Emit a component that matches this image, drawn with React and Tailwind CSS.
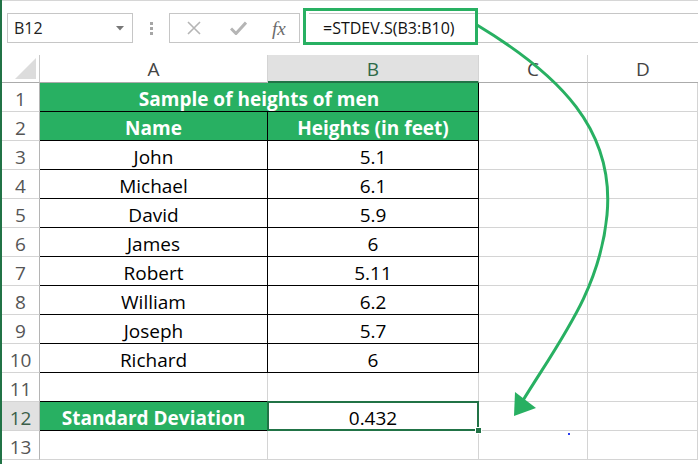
import React from 'react';

const names = [
    ['John', '5.1'],
    ['Michael', '6.1'],
    ['David', '5.9'],
    ['James', '6'],
    ['Robert', '5.11'],
    ['William', '6.2'],
    ['Joseph', '5.7'],
    ['Richard', '6'],
];

function RowHead({ n, active }) {
    return (
        <div
            className={
                'h-[29px] pt-[4px] flex items-center justify-center border-b border-r border-b-[#d4d4d4] border-r-[#b4b4b4] text-[19px] leading-[24px] ' +
                (active ? 'bg-[#e1e1e1] text-[#3b5e49]' : 'bg-white text-[#555]')
            }
        >
            {n}
        </div>
    );
}

function Cell({ children, className = '' }) {
    return (
        <div className={'h-[29px] pt-[4px] flex items-center justify-center border-b border-r text-[19px] leading-[24px] ' + className}>
            {children}
        </div>
    );
}

const gray = 'border-[#d4d4d4]';

export default function App() {
    return (
        <div className="relative w-[698px] h-[464px] overflow-hidden bg-white flex" style={{ fontFamily: '"Open Sans", sans-serif' }}>
            <div className="w-[2px] bg-[#217346] shrink-0" />
            <div className="flex-1 flex flex-col">
                {/* Formula bar */}
                <div className="h-[55px] border-t border-[#d6d6d6] flex items-start pt-[12px]">
                    <div className="ml-[5px] w-[126px] h-[30px] border border-[#c6c6c6] flex items-center justify-between pl-[6px] pr-[8px]">
                        <span className="text-[16px] text-[#222]">B12</span>
                        <svg width="8" height="5" viewBox="0 0 8 5">
                            <path d="M0 0 L8 0 L4 4.5 Z" fill="#777" />
                        </svg>
                    </div>
                    <div className="ml-[17px] mt-[9px] flex flex-col gap-[2px]">
                        <div className="w-[3px] h-[3px] bg-[#a6a6a6]" />
                        <div className="w-[3px] h-[3px] bg-[#a6a6a6]" />
                        <div className="w-[3px] h-[3px] bg-[#a6a6a6]" />
                    </div>
                    <div className="ml-[16px] w-[131px] h-[30px] border border-[#c6c6c6] flex items-center">
                        <svg className="ml-[17px]" width="14" height="14" viewBox="0 0 14 14">
                            <path d="M1 1 L13 13 M13 1 L1 13" stroke="#b5b5b5" strokeWidth="1.6" />
                        </svg>
                        <svg className="ml-[29px]" width="17" height="14" viewBox="0 0 17 14">
                            <path d="M1 7.5 L6 12.5 L16 1.5" stroke="#b5b5b5" strokeWidth="3" fill="none" />
                        </svg>
                        <span
                            className="ml-[25px] text-[19px] italic text-[#6b6b6b] leading-none"
                            style={{ fontFamily: '"Liberation Serif", serif' }}
                        >
                            fx
                        </span>
                    </div>
                    <div className="ml-[9px] flex-1 h-[30px] border-y border-[#c6c6c6] flex items-center pl-[14px]">
                        <span className="text-[16px] text-[#111]">=STDEV.S(B3:B10)</span>
                    </div>
                </div>

                {/* Sheet */}
                <div className="grid grid-cols-[38px_228px_211px_109px_110px]">
                    {/* column headers */}
                    <div className="h-[28px] border-b border-r border-b-[#ababab] border-r-[#c8c8c8] flex items-end justify-end pr-[3px] pb-[3px]">
                        <svg width="21" height="21" viewBox="0 0 21 21">
                            <path d="M21 0 L21 21 L0 21 Z" fill="#dcdcdc" />
                        </svg>
                    </div>
                    <div className="h-[28px] pt-[2px] border-b border-r border-b-[#ababab] border-r-[#d4d4d4] flex items-center justify-center text-[19px] text-[#444]">A</div>
                    <div className="h-[28px] pt-[2px] border-b-2 border-r border-b-[#217346] border-r-[#d4d4d4] bg-[#e1e1e1] flex items-center justify-center text-[19px] text-[#2e6a48]">B</div>
                    <div className="h-[28px] pt-[2px] border-b border-r border-b-[#ababab] border-r-[#d4d4d4] flex items-center justify-center text-[19px] text-[#444]">C</div>
                    <div className="h-[28px] pt-[2px] border-b border-b-[#ababab] flex items-center justify-center text-[19px] text-[#444]">D</div>

                    {/* row 1 */}
                    <RowHead n={1} />
                    <Cell className="col-span-2 border-black text-white font-bold bg-[#28b062]">
                        Sample of heights of men
                    </Cell>
                    <Cell className={gray} />
                    <Cell className={gray} />

                    {/* row 2 */}
                    <RowHead n={2} />
                    <Cell className="border-black text-white font-bold bg-[#28b062]">Name</Cell>
                    <Cell className="border-black text-white font-bold bg-[#28b062]">Heights (in feet)</Cell>
                    <Cell className={gray} />
                    <Cell className={gray} />

                    {names.map(([name, h], i) => (
                        <React.Fragment key={name}>
                            <RowHead n={i + 3} />
                            <Cell className="border-black text-black">{name}</Cell>
                            <Cell className="border-black text-black">{h}</Cell>
                            <Cell className={gray} />
                            <Cell className={gray} />
                        </React.Fragment>
                    ))}

                    {/* row 11 */}
                    <RowHead n={11} />
                    <Cell className="border-b-black border-r-[#d4d4d4]" />
                    <Cell className={gray} />
                    <Cell className={gray} />
                    <Cell className={gray} />

                    {/* row 12 */}
                    <RowHead n={12} active />
                    <Cell className="border-black text-white font-bold bg-[#28b062]">Standard Deviation</Cell>
                    <Cell className={'relative text-black ' + gray}>
                        0.432
                        <div className="absolute -left-[1px] -top-[1px] w-[212px] h-[30px] border-2 border-[#217346]" />
                        <div className="absolute -right-[4px] -bottom-[4px] w-[7px] h-[7px] bg-[#217346] border border-white" />
                    </Cell>
                    <Cell className={gray} />
                    <Cell className={gray} />

                    {/* row 13 */}
                    <RowHead n={13} />
                    <Cell className={gray} />
                    <Cell className={gray} />
                    <Cell className={gray} />
                    <Cell className={gray} />
                </div>
            </div>

            {/* annotation: highlight + arrow */}
            <div className="absolute left-[303px] top-[8px] w-[175px] h-[37px] border-[3px] border-[#28b062]" />
            <svg className="absolute left-0 top-0 pointer-events-none" width="698" height="464" viewBox="0 0 698 464">
                <path
                    d="M477 25 C560 75 615 130 607 215 C600 290 560 340 522 402"
                    stroke="#28b062"
                    strokeWidth="3"
                    fill="none"
                />
                <path d="M514 416 L515 392 L536 408 Z" fill="#28b062" />
                <rect x="568" y="433" width="2" height="2" fill="#2b3df0" />
            </svg>
        </div>
    );
}
